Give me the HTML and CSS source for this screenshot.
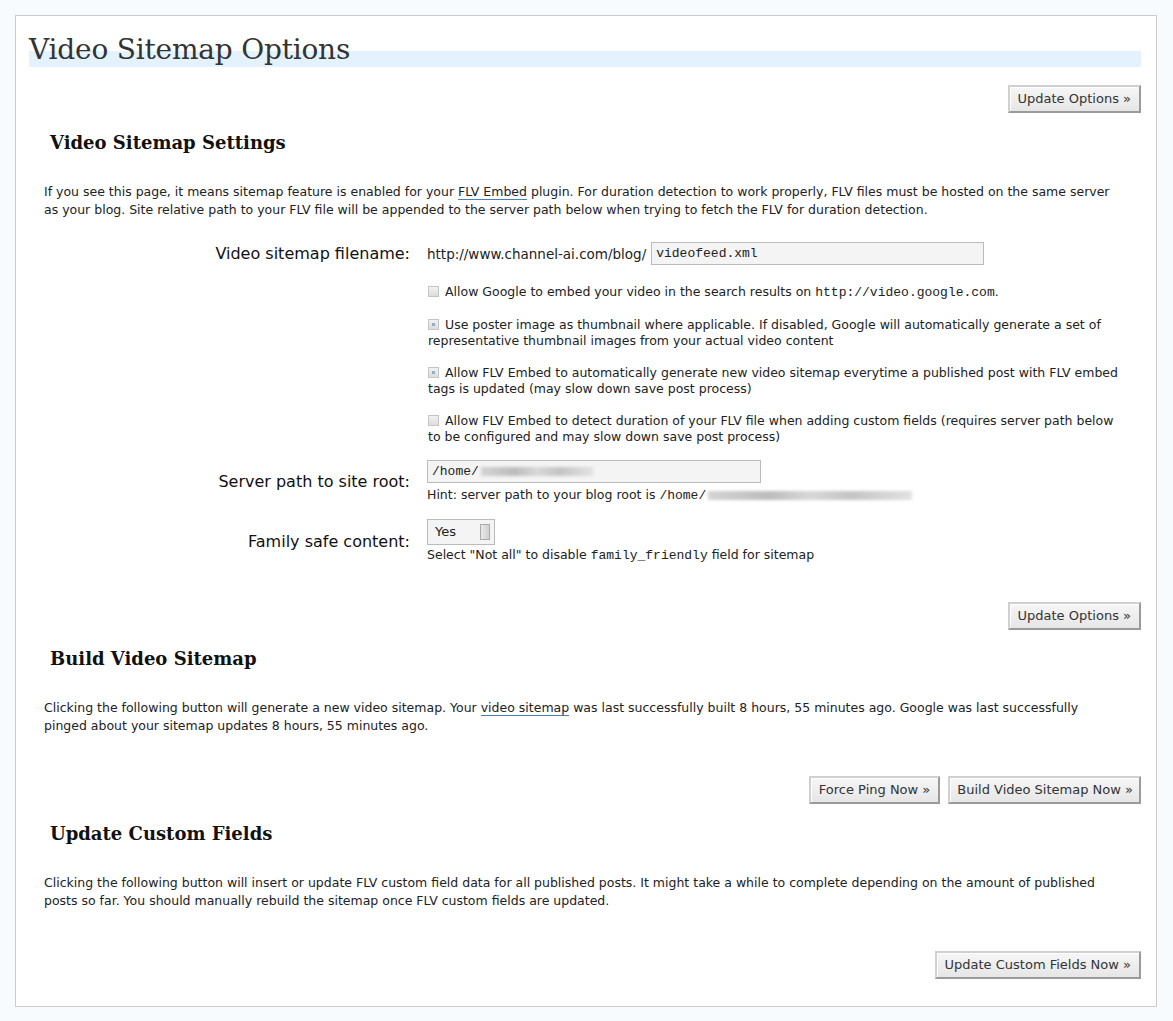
FILE: index.html
```html
<!DOCTYPE html>
<html>
<head>
<meta charset="utf-8">
<title>Video Sitemap Options</title>
<link rel="stylesheet" href="styles.css">
</head>
<body>
<div class="wrap">
  <h2 class="title">Video Sitemap Options</h2>
  <div class="submit s1"><span class="button">Update Options &raquo;</span></div>

  <h3 class="sect h-first">Video Sitemap Settings</h3>
  <p class="desc">If you see this page, it means sitemap feature is enabled for your <a class="lnk">FLV Embed</a> plugin. For duration detection to work properly, FLV files must be hosted on the same server as your blog. Site relative path to your FLV file will be appended to the server path below when trying to fetch the FLV for duration detection.</p>

  <div class="form">
    <div class="label">Video sitemap filename:</div>
    <div class="val row-file"><span class="prefix">http://www.channel-ai.com/blog/</span><span class="input inp-file">videofeed.xml</span></div>

    <div class="val check first"><span class="cb"></span>Allow Google to embed your video in the search results on <code>http://video.google.com</code>.</div>
    <div class="val check"><span class="cb on"></span>Use poster image as thumbnail where applicable. If disabled, Google will automatically generate a set of representative thumbnail images from your actual video content</div>
    <div class="val check"><span class="cb on"></span>Allow FLV Embed to automatically generate new video sitemap everytime a published post with FLV embed tags is updated (may slow down save post process)</div>
    <div class="val check"><span class="cb"></span>Allow FLV Embed to detect duration of your FLV file when adding custom fields (requires server path below to be configured and may slow down save post process)</div>

    <div class="label lbl-path">Server path to site root:</div>
    <div class="val row-path"><span class="input inp-path">/home/<span class="blur b1"></span></span><div class="hint hint-path">Hint: server path to your blog root is <code>/home/</code><span class="blur b2"></span></div></div>

    <div class="label lbl-family">Family safe content:</div>
    <div class="val row-family"><span class="select">Yes<span class="thumb"></span></span><div class="hint hint-family">Select "Not all" to disable <code>family_friendly</code> field for sitemap</div></div>
  </div>
  <div class="submit s2"><span class="button">Update Options &raquo;</span></div>

  <h3 class="sect h-mid">Build Video Sitemap</h3>
  <p class="desc">Clicking the following button will generate a new video sitemap. Your <a class="lnk">video sitemap</a> was last successfully built 8 hours, 55 minutes ago. Google was last successfully pinged about your sitemap updates 8 hours, 55 minutes ago.</p>
  <div class="submit s3"><span class="button">Force Ping Now &raquo;</span><span class="button btn-build">Build Video Sitemap Now &raquo;</span></div>

  <h3 class="sect h-last">Update Custom Fields</h3>
  <p class="desc">Clicking the following button will insert or update FLV custom field data for all published posts. It might take a while to complete depending on the amount of published posts so far. You should manually rebuild the sitemap once FLV custom fields are updated.</p>
  <div class="submit s4"><span class="button">Update Custom Fields Now &raquo;</span></div>
</div>
</body>
</html>
```
FILE: styles.css
```css
html, body {
  margin: 0;
  padding: 0;
  background: #f7fbfe;
}
body {
  padding: 15px 16px 15px 15px;
  font-family: "DejaVu Sans", Verdana, sans-serif;
  color: #222;
}
.wrap {
  background: #fff;
  border: 1px solid #cccccc;
  padding: 16px 15px 26px 13px;
  height: 992px;
  box-sizing: border-box;
}
.title {
  margin: 0;
  font-family: "DejaVu Serif", Georgia, serif;
  font-weight: normal;
  font-size: 28px;
  line-height: 36px;
  height: 36px;
  color: #333;
  background: linear-gradient(to bottom, transparent 19px, #e4f2fd 19px, #e4f2fd 35px, transparent 35px);
  letter-spacing: -0.2px;
}
.submit {
  display: flex;
  justify-content: flex-end;
  gap: 8px;
  margin-top: 17px;
}
.s1 {
  margin-top: 17px;
}
.button {
  display: inline-block;
  font-family: "DejaVu Sans", Verdana, sans-serif;
  font-size: 13px;
  line-height: 16px;
  padding: 4px 8px 4px 8px;
  color: #333;
  background: linear-gradient(#f6f6f6, #e6e6e6);
  border: 2px solid;
  border-color: #d0d0d0 #9a9a9a #9a9a9a #d0d0d0;
  box-shadow: inset 1px 1px 0 #fff;
}
.btn-build {
  padding-left: 7px;
  padding-right: 6px;
}
.sect {
  margin: 15px 0 0 21px;
  font-family: "DejaVu Serif", Georgia, serif;
  font-weight: bold;
  font-size: 18px;
  line-height: 26px;
  color: #111;
}
.h-first {
  margin-top: 17px;
}
.h-mid {
  margin-top: 16px;
}
.h-last {
  margin-top: 17px;
}
.desc {
  margin: 27px 30px 0 15px;
  font-size: 12.5px;
  line-height: 18px;
  color: #222;
}
.lnk {
  color: #222;
  text-decoration: none;
  border-bottom: 1px solid #4a7fb5;
}
code {
  font-family: "Liberation Mono", "Courier New", monospace;
  font-size: 13px;
}
.form {
  display: grid;
  grid-template-columns: 366px 1fr;
  column-gap: 17px;
  margin: 23px 22px 0 15px;
}
.label {
  grid-column: 1;
  align-self: center;
  text-align: right;
  font-size: 16px;
  line-height: 20px;
  color: #111;
}
.lbl-path {
  margin-top: 15px;
}
.lbl-family {
  margin-top: 15px;
}
.val {
  grid-column: 2;
  font-size: 12.5px;
  line-height: 16px;
}
.row-file {
  display: flex;
  align-items: center;
  gap: 5px;
}
.prefix {
  color: #222;
  font-size: 13.5px;
}
.input {
  display: inline-block;
  box-sizing: border-box;
  background: #f4f4f4;
  border: 1px solid #bbbbbb;
  font-family: "Liberation Mono", "Courier New", monospace;
  font-size: 13px;
  line-height: 21px;
  height: 23px;
  padding: 0 4px;
  color: #222;
}
.inp-file {
  width: 333px;
}
.check {
  margin-top: 19px;
  padding-left: 1px;
}
.check + .check {
  margin-top: 16px;
}
.cb {
  display: inline-block;
  width: 11px;
  height: 11px;
  box-sizing: border-box;
  border: 1px solid #c4c4c4;
  background: linear-gradient(#f2f2f2, #dcdcdc);
  vertical-align: -1px;
  margin-right: 6px;
  position: relative;
}
.cb.on::after {
  content: "";
  position: absolute;
  left: 3px;
  top: 3px;
  width: 3px;
  height: 3px;
  background: #8fb0c8;
}
.row-path {
  margin-top: 15px;
}
.inp-path {
  width: 334px;
  display: flex;
  align-items: center;
}
.blur {
  display: inline-block;
  height: 9px;
  filter: blur(1.5px);
  background: linear-gradient(90deg, #d4d4d4, #bcbcbc 30%, #d8d8d8 50%, #c4c4c4 70%, #e2e2e2);
}
.b1 {
  width: 112px;
  margin-left: 2px;
}
.b2 {
  width: 204px;
  margin-left: 2px;
  vertical-align: middle;
}
.hint {
  line-height: 16px;
}
.hint-path {
  margin-top: 4px;
}
.hint-family {
  margin-top: 2px;
}
.row-family {
  margin-top: 15px;
}
.select {
  display: block;
  position: relative;
  width: 68px;
  height: 26px;
  box-sizing: border-box;
  border: 1px solid #bbbbbb;
  background: #f4f4f4;
  font-size: 13px;
  line-height: 24px;
  padding-left: 7px;
  color: #222;
}
.thumb {
  position: absolute;
  right: 4px;
  top: 4px;
  width: 10px;
  height: 16px;
  box-sizing: border-box;
  border: 1px solid #aaa;
  background: linear-gradient(90deg, #e8e8e8, #d0d0d0);
}
.s2 {
  margin-top: 38px;
}
.s3 {
  margin-top: 41px;
}
.s4 {
  margin-top: 41px;
}
```
